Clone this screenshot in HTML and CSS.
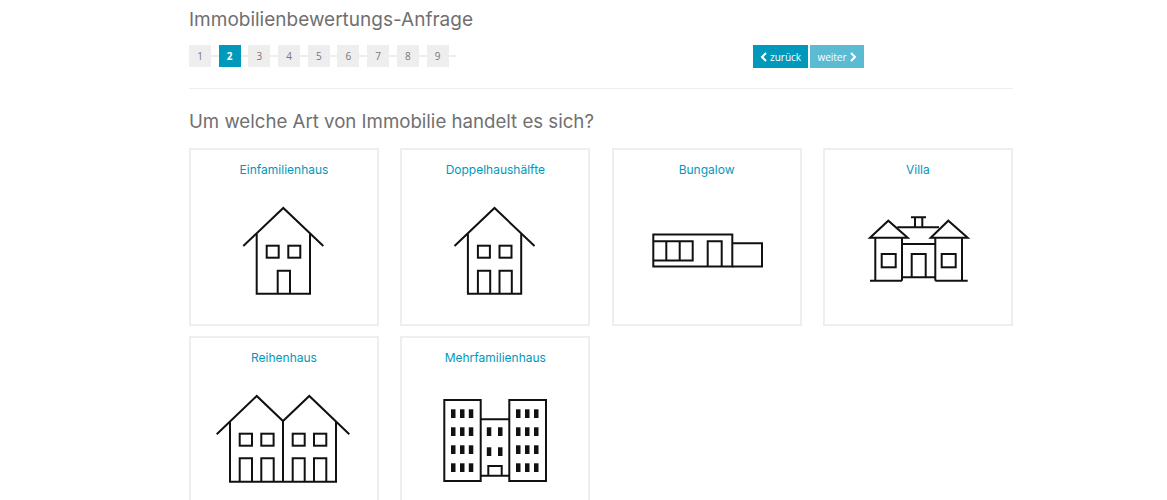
FILE: index.html
```html
<!DOCTYPE html>
<html lang="de">
<head>
    <meta charset="UTF-8">
    <meta name="viewport" content="width=device-width, initial-scale=1.0">
    <link rel="stylesheet" href="styles.css">
    <title>Immobilienbewertungs-Anfrage</title>
</head>
<body>
    <div class="container">
        <h1>Immobilienbewertungs-Anfrage</h1>

        <div class="toolbar">
            <div class="pager">
                <a class="step">1</a>
                <a class="step active">2</a>
                <a class="step">3</a>
                <a class="step">4</a>
                <a class="step">5</a>
                <a class="step">6</a>
                <a class="step">7</a>
                <a class="step">8</a>
                <a class="step">9</a>
            </div>
            <div class="nav-buttons">
                <button class="btn" type="button">
                    <svg class="chevron" viewBox="0 0 8 10"><path d="M6 1L2 5l4 4"/></svg>zurück
                </button>
                <button class="btn btn-disabled" type="button">
                    weiter<svg class="chevron" viewBox="0 0 8 10"><path d="M2 1l4 4-4 4"/></svg>
                </button>
            </div>
        </div>

        <hr>

        <h2>Um welche Art von Immobilie handelt es sich?</h2>

        <div class="cards">
            <a class="card">
                <span class="card-title">Einfamilienhaus</span>
                <svg class="icon" viewBox="0 0 190 130">
                    <path d="M54.3 58L94.3 20 134.3 58"/>
                    <path d="M67.7 46V105.7H121V46"/>
                    <rect x="77.7" y="57.7" width="12" height="12"/>
                    <rect x="99.3" y="57.7" width="12" height="12"/>
                    <path d="M88.7 105.7V82.7H101V105.7"/>
                </svg>
            </a>

            <a class="card">
                <span class="card-title">Doppelhaushälfte</span>
                <svg class="icon" viewBox="0 0 190 130">
                    <path d="M54.5 58L94.5 20 134.5 58"/>
                    <path d="M67.9 46V105.7H121.2V46"/>
                    <rect x="77.9" y="57.7" width="12" height="12"/>
                    <rect x="99.5" y="57.7" width="12" height="12"/>
                    <path d="M77.9 105.7V82.7H90.2V105.7"/>
                    <path d="M99.5 105.7V82.7H111.8V105.7"/>
                </svg>
            </a>

            <a class="card">
                <span class="card-title">Bungalow</span>
                <svg class="icon" viewBox="0 0 190 130">
                    <rect x="41.3" y="46.5" width="79" height="32"/>
                    <path d="M120.3 55.2H150V78.5H120.3"/>
                    <path d="M41.3 53.2H80.7V72.5H41.3"/>
                    <path d="M54.3 53.2V72.5M67.7 53.2V72.5"/>
                    <path d="M95.7 78.5V53.2H109.7V78.5"/>
                </svg>
            </a>

            <a class="card">
                <span class="card-title">Villa</span>
                <svg class="icon" viewBox="0 0 190 130">
                    <path d="M47 49.7L65.3 32.7 84.7 49.7Z"/>
                    <path d="M107.7 49.7L125.3 32.7 144.7 49.7Z"/>
                    <path d="M52.3 49.7V92.7M79 49.7V92.7M112.3 49.7V92.7M139 49.7V92.7"/>
                    <path d="M47 92.7H79M112.3 92.7H144.7"/>
                    <path d="M79 56H112.3M79 89.3H112.3M74.3 39.3H116"/>
                    <path d="M92 39.3V29.3M99.3 39.3V29.3M88 29.3H103"/>
                    <rect x="58.7" y="66" width="14" height="13.3"/>
                    <rect x="118.7" y="66" width="14" height="13.3"/>
                    <path d="M88.7 89.3V66H102.7V89.3"/>
                </svg>
            </a>

            <a class="card">
                <span class="card-title">Reihenhaus</span>
                <svg class="icon" viewBox="0 0 190 130">
                    <path d="M27.7 58.3L67.7 20 94 45 120.3 20 160.3 58.3"/>
                    <path d="M41 46V105.7H147V46M94 45V105.7"/>
                    <rect x="50.7" y="57.7" width="12.3" height="12"/>
                    <rect x="72.3" y="57.7" width="12.3" height="12"/>
                    <rect x="103.7" y="57.7" width="12" height="12"/>
                    <rect x="125" y="57.7" width="12.3" height="12"/>
                    <path d="M50.7 105.7V82.3H63V105.7M72.3 105.7V82.3H84.7V105.7"/>
                    <path d="M103.7 105.7V82.3H115.7V105.7M125 105.7V82.3H137.3V105.7"/>
                </svg>
            </a>

            <a class="card">
                <span class="card-title">Mehrfamilienhaus</span>
                <svg class="icon" viewBox="0 0 190 130">
                    <g class="block">
                        <rect x="44.3" y="24" width="36.4" height="81"/>
                        <rect x="109.3" y="24" width="36.7" height="81"/>
                        <path d="M80.7 43.3H109.3M80.7 99.7H109.3"/>
                        <path d="M88.3 99.7V90H101.7V99.7"/>
                    </g>
                    <g class="windows">
                        <rect x="51" y="33.3" width="4.5" height="8.7"/>
                        <rect x="60" y="33.3" width="4.5" height="8.7"/>
                        <rect x="68.8" y="33.3" width="4.5" height="8.7"/>
                        <rect x="51" y="51.3" width="4.5" height="8.7"/>
                        <rect x="60" y="51.3" width="4.5" height="8.7"/>
                        <rect x="68.8" y="51.3" width="4.5" height="8.7"/>
                        <rect x="51" y="69.3" width="4.5" height="8.7"/>
                        <rect x="60" y="69.3" width="4.5" height="8.7"/>
                        <rect x="68.8" y="69.3" width="4.5" height="8.7"/>
                        <rect x="51" y="87.3" width="4.5" height="8.7"/>
                        <rect x="60" y="87.3" width="4.5" height="8.7"/>
                        <rect x="68.8" y="87.3" width="4.5" height="8.7"/>

                        <rect x="116" y="33.3" width="4.5" height="8.7"/>
                        <rect x="125" y="33.3" width="4.5" height="8.7"/>
                        <rect x="134" y="33.3" width="4.5" height="8.7"/>
                        <rect x="116" y="51.3" width="4.5" height="8.7"/>
                        <rect x="125" y="51.3" width="4.5" height="8.7"/>
                        <rect x="134" y="51.3" width="4.5" height="8.7"/>
                        <rect x="116" y="69.3" width="4.5" height="8.7"/>
                        <rect x="125" y="69.3" width="4.5" height="8.7"/>
                        <rect x="134" y="69.3" width="4.5" height="8.7"/>
                        <rect x="116" y="87.3" width="4.5" height="8.7"/>
                        <rect x="125" y="87.3" width="4.5" height="8.7"/>
                        <rect x="134" y="87.3" width="4.5" height="8.7"/>

                        <rect x="86.8" y="51.3" width="4.5" height="8.7"/>
                        <rect x="98" y="51.3" width="4.5" height="8.7"/>
                        <rect x="86.8" y="71.3" width="4.5" height="8.7"/>
                        <rect x="98" y="71.3" width="4.5" height="8.7"/>
                    </g>
                </svg>
            </a>
        </div>
    </div>
</body>
</html>
```

FILE: styles.css
```css
html, body {
    height: 500px;
    overflow: hidden;
}

body {
    font-family: "Inter", "Liberation Sans", sans-serif;
    margin: 0;
    padding: 0;
    background-color: #fff;
    color: #707070;
}

.container {
    width: 824px;
    margin-left: 189px;
}

h1 {
    font-size: 19px;
    font-weight: 400;
    line-height: 24px;
    margin: 0;
    padding-top: 8px;
}

.toolbar {
    display: flex;
    align-items: flex-start;
    margin-top: 13px;
}

.pager {
    display: flex;
    gap: 7.7px;
    width: 267px;
    margin-right: 297px;
    background: linear-gradient(#eee, #eee) center / 100% 2px no-repeat;
}

.step {
    width: 22px;
    height: 22px;
    display: flex;
    align-items: center;
    justify-content: center;
    background-color: #eee;
    font-family: "Open Sans", sans-serif;
    font-size: 10px;
    color: #777;
}

.step.active {
    background-color: #0099bb;
    color: #fff;
    font-weight: 700;
}

.nav-buttons {
    display: flex;
    gap: 2.3px;
}

.btn {
    height: 23px;
    padding: 0 7px;
    display: flex;
    align-items: center;
    gap: 2px;
    border: none;
    background-color: #0099bb;
    color: #fff;
    font-family: "Open Sans", sans-serif;
    font-size: 10px;
}

.btn-disabled {
    background-color: #5bbbd3;
}

.chevron {
    width: 8px;
    height: 10px;
    fill: none;
    stroke: #fff;
    stroke-width: 2;
}

hr {
    border: none;
    border-top: 1px solid #eee;
    margin: 20px 0 0;
}

h2 {
    font-size: 18.65px;
    font-weight: 400;
    line-height: 24px;
    margin: 20px 0 15px;
}

.cards {
    display: grid;
    grid-template-columns: repeat(4, 190px);
    column-gap: 21.3px;
    row-gap: 10px;
}

.card {
    height: 178px;
    box-sizing: border-box;
    border: 2px solid #eee;
    text-align: center;
}

.card-title {
    display: block;
    height: 38px;
    padding-top: 12px;
    box-sizing: border-box;
    font-size: 12px;
    line-height: 16px;
    color: #0099bb;
}

.icon {
    display: block;
    width: 190px;
    height: 130px;
    margin-left: -2px;
    fill: none;
    stroke: #111;
    stroke-width: 2;
}

.windows {
    fill: #111;
    stroke: none;
}
```
